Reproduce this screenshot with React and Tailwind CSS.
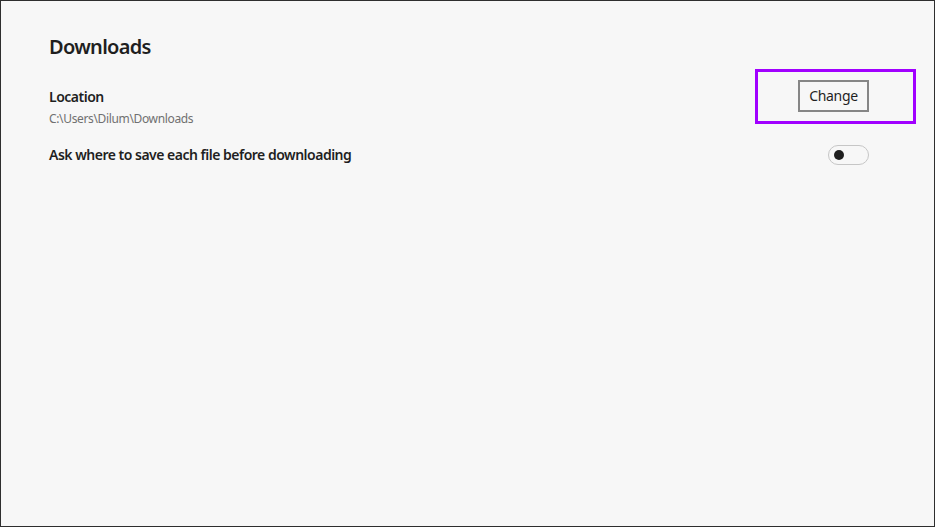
import { useState } from 'react';

const Toggle = ({ on, onChange }) => (
  <button
    onClick={() => onChange(!on)}
    className="flex h-[20px] w-[41px] items-center rounded-full border border-[#c6c6c6] bg-[#f7f7f7] px-[5px]"
  >
    <span className={`h-[10px] w-[10px] rounded-full bg-[#1f1f1f] ${on ? 'ml-auto' : ''}`} />
  </button>
);

export default function App() {
  const [askEachTime, setAskEachTime] = useState(false);

  return (
    <div
      className="h-[527px] w-[935px] border border-[#2e2e2e] bg-[#f7f7f7] text-[#1f1f1f]"
      style={{ fontFamily: '"Noto Sans", "Open Sans", sans-serif' }}
    >
      <div className="pl-[48px] pr-[65px] pt-[32px]">
        <h1 className="text-[20px] font-semibold leading-[28px] tracking-[-0.7px]">Downloads</h1>

        <div className="mt-[26px] flex items-start justify-between">
          <div>
            <p className="text-[14px] font-semibold leading-[20px] tracking-[-0.5px]">Location</p>
            <p className="mt-[4px] text-[12px] leading-[16px] tracking-[-0.35px] text-[#707070]">C:\Users\Dilum\Downloads</p>
          </div>
          {/* highlight box drawn over the button */}
          <div className="relative -mt-[7px]">
            <button className="h-[32px] w-[71px] border-2 border-[#868686] bg-[#f7f7f7] text-[14px] leading-[20px] tracking-[-0.3px] text-[#1f1f1f]">
              Change
            </button>
            <div className="pointer-events-none absolute -bottom-[12px] -left-[43px] -right-[47px] -top-[11px] border-[3px] border-[#a100ff]" />
          </div>
        </div>

        <div className="mt-[18px] flex items-center justify-between">
          <p className="text-[14px] font-semibold leading-[20px] tracking-[-0.5px]">Ask where to save each file before downloading</p>
          <Toggle on={askEachTime} onChange={setAskEachTime} />
        </div>
      </div>
    </div>
  );
}
